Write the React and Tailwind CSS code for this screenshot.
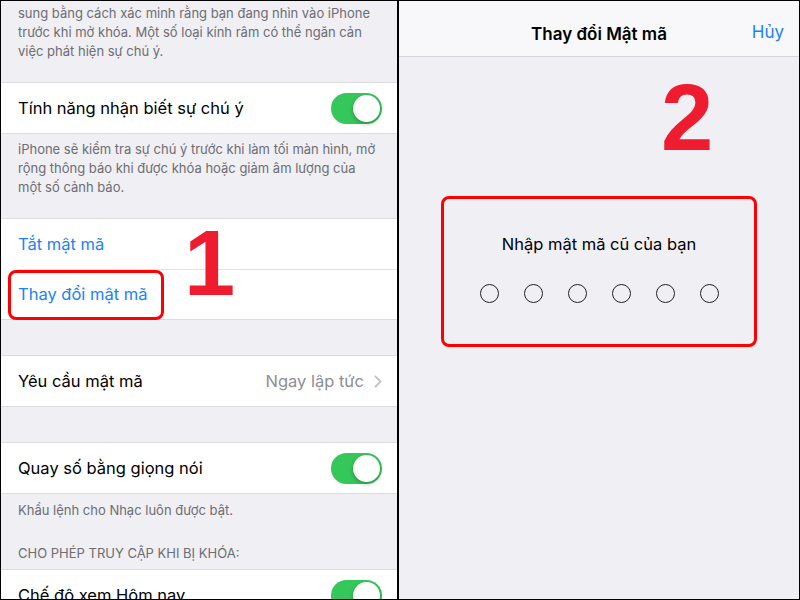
import React from "react";

const FONT = { fontFamily: "Inter, 'Noto Sans', sans-serif" };

function Toggle() {
  return (
    <div className="relative h-[31px] w-[51px] shrink-0 rounded-full bg-[#34c759]">
      <div className="absolute right-[2px] top-[2px] h-[27px] w-[27px] rounded-full bg-white shadow-[0_2px_4px_rgba(0,0,0,0.25)]" />
    </div>
  );
}

function Row({ children, right, className = "" }) {
  return (
    <div className={`flex h-[50px] items-center justify-between bg-white pl-[17px] pr-[15px] ${className}`}>
      <span className="text-[16.5px] text-black">{children}</span>
      {right}
    </div>
  );
}

function Chevron() {
  return (
    <svg viewBox="0 0 8 13" className="ml-[10px] h-[13px] w-[8px]" aria-hidden="true">
      <path d="M1.5 1.5 6.5 6.5 1.5 11.5" fill="none" stroke="#c4c4c7" strokeWidth="1.8" strokeLinecap="round" strokeLinejoin="round" />
    </svg>
  );
}

function Circles() {
  return (
    <div className="mt-[27px] flex items-center justify-center gap-[25px]">
      {Array.from({ length: 6 }).map((_, i) => (
        <div key={i} className="h-[19px] w-[19px] rounded-full border-[1.5px] border-[#222]" />
      ))}
    </div>
  );
}

const NOTE = "whitespace-nowrap text-[13px] leading-[19px] text-[#6d6d72]";

export default function App() {
  return (
    <div className="flex h-[600px] w-[800px] overflow-hidden border border-black bg-[#efeff4]" style={FONT}>
      {/* Left: settings list */}
      <div className="relative w-[396px] shrink-0 bg-[#efeff4]">
        <div className={`h-[81px] px-[17px] pt-[3px] ${NOTE}`}>
          <p>sung bằng cách xác minh rằng bạn đang nhìn vào iPhone</p>
          <p>trước khi mở khóa. Một số loại kính râm có thể ngăn cản</p>
          <p>việc phát hiện sự chú ý.</p>
        </div>
        <div className="border-y border-[#dcdce0]">
          <Row right={<Toggle />}>Tính năng nhận biết sự chú ý</Row>
        </div>
        <div className={`h-[84px] px-[17px] pt-[6px] ${NOTE}`}>
          <p>iPhone sẽ kiểm tra sự chú ý trước khi làm tối màn hình, mở</p>
          <p>rộng thông báo khi được khóa hoặc giảm âm lượng của</p>
          <p>một số cảnh báo.</p>
        </div>
        <div className="border-y border-[#dcdce0] bg-white">
          <div className="flex h-[50px] items-center px-[17px] text-[16.5px] text-[#1a82fb]">Tắt mật mã</div>
          <div className="ml-[17px] h-px bg-[#e2e2e6]" />
          <div className="flex h-[49px] items-center px-[17px] text-[16.5px] text-[#1a82fb]">Thay đổi mật mã</div>
        </div>
        <div className="h-[35px]" />
        <div className="border-y border-[#dcdce0]">
          <Row
            right={
              <span className="flex items-center text-[16.5px] text-[#8e8e93]">
                Ngay lập tức
                <Chevron />
              </span>
            }
          >
            Yêu cầu mật mã
          </Row>
        </div>
        <div className="h-[35px]" />
        <div className="border-y border-[#dcdce0]">
          <Row right={<Toggle />}>Quay số bằng giọng nói</Row>
        </div>
        <div className={`px-[17px] pt-[7px] ${NOTE}`}>Khẩu lệnh cho Nhạc luôn được bật.</div>
        <div className={`px-[17px] pb-[6px] pt-[24px] ${NOTE}`}>CHO PHÉP TRUY CẬP KHI BỊ KHÓA:</div>
        <div className="border-t border-[#dcdce0]">
          <Row right={<Toggle />}>Chế độ xem Hôm nay</Row>
        </div>

        {/* annotation 1 */}
        <div className="absolute left-[7px] top-[269px] h-[50px] w-[156px] rounded-[8px] border-[3px] border-[#ff0000]" />
        <div
          className="absolute left-[183px] top-[216px] text-[92px] font-bold leading-none text-[#ee1c2e]"
          style={{ fontFamily: "'Liberation Sans', Arial, sans-serif" }}
        >
          1
        </div>
      </div>

      {/* divider */}
      <div className="w-[2px] shrink-0 bg-black" />

      {/* Right: change passcode */}
      <div className="relative flex flex-1 flex-col bg-[#efeff4]">
        <div className="relative flex h-[56px] items-center justify-center border-b border-[#d6d6da] bg-[#f8f8fa] pt-[12px]">
          <span className="text-[17px] font-semibold text-black">Thay đổi Mật mã</span>
          <span className="absolute bottom-[11px] right-[15px] text-[17px] text-[#1a82fb]">Hủy</span>
        </div>
        <div
          className="absolute left-[262px] top-[70px] text-[94px] font-bold leading-none text-[#ee1c2e]"
          style={{ fontFamily: "'Liberation Sans', Arial, sans-serif" }}
        >
          2
        </div>
        <div className="mx-auto mt-[139px] h-[151px] w-[316px] rounded-[8px] border-[3px] border-[#ff0000] pt-[33px] text-center">
          <div className="text-[16.5px] text-black">Nhập mật mã cũ của bạn</div>
          <Circles />
        </div>
      </div>
    </div>
  );
}
